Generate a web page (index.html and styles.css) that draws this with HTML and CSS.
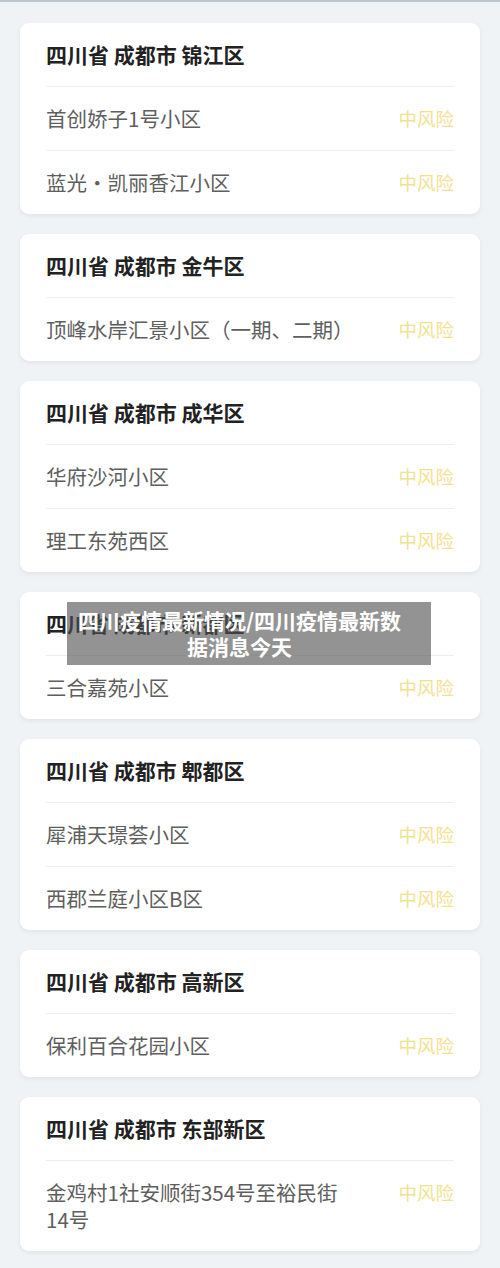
FILE: index.html
```html
<!DOCTYPE html>
<html lang="zh-CN">
<head>
    <meta charset="UTF-8">
    <meta name="viewport" content="width=device-width, initial-scale=1.0">
    <title>四川疫情最新情况</title>
    <link rel="stylesheet" href="styles.css">
</head>
<body>
    <div class="page">
        <div class="card">
            <div class="area">四川省 成都市 锦江区</div>
            <div class="row"><span class="name">首创娇子1号小区</span><span class="risk">中风险</span></div>
            <div class="row"><span class="name">蓝光・凯丽香江小区</span><span class="risk">中风险</span></div>
        </div>

        <div class="card">
            <div class="area">四川省 成都市 金牛区</div>
            <div class="row"><span class="name">顶峰水岸汇景小区（一期、二期）</span><span class="risk">中风险</span></div>
        </div>

        <div class="card">
            <div class="area">四川省 成都市 成华区</div>
            <div class="row"><span class="name">华府沙河小区</span><span class="risk">中风险</span></div>
            <div class="row"><span class="name">理工东苑西区</span><span class="risk">中风险</span></div>
        </div>

        <div class="card">
            <div class="area">四川省 成都市 新都区</div>
            <div class="row"><span class="name">三合嘉苑小区</span><span class="risk">中风险</span></div>
        </div>

        <div class="card">
            <div class="area">四川省 成都市 郫都区</div>
            <div class="row"><span class="name">犀浦天璟荟小区</span><span class="risk">中风险</span></div>
            <div class="row"><span class="name">西郡兰庭小区B区</span><span class="risk">中风险</span></div>
        </div>

        <div class="card">
            <div class="area">四川省 成都市 高新区</div>
            <div class="row"><span class="name">保利百合花园小区</span><span class="risk">中风险</span></div>
        </div>

        <div class="card">
            <div class="area">四川省 成都市 东部新区</div>
            <div class="row"><span class="name">金鸡村1社安顺街354号至裕民街14号</span><span class="risk">中风险</span></div>
        </div>
    </div>

    <div class="caption">四川疫情最新情况/四川疫情最新数据消息今天</div>
</body>
</html>
```

FILE: styles.css
```css
body {
    margin: 0;
    background-color: #f0f3f5;
    font-family: "Noto Sans CJK SC", "Noto Sans", sans-serif;
    border-top: 2px solid #bcc7cf;
}

.page {
    display: flex;
    flex-direction: column;
    gap: 20px;
    padding: 21px 20px 20px;
}

.card {
    background-color: white;
    border-radius: 9px;
    box-shadow: 0 2px 4px rgba(120, 135, 150, 0.12);
}

.area {
    margin: 0 26px;
    padding: 18px 0;
    line-height: 27px;
    font-size: 21px;
    font-weight: bold;
    color: #222;
    border-bottom: 1px solid #eeeeee;
}

.row {
    display: flex;
    justify-content: space-between;
    align-items: flex-start;
    gap: 50px;
    margin: 0 26px;
    padding: 18px 0;
    line-height: 27px;
    border-bottom: 1px solid #eeeeee;
}

.row:last-child {
    border-bottom: none;
}

.name {
    font-size: 20.5px;
    color: #5e5e5e;
}

.risk {
    flex-shrink: 0;
    font-size: 18.5px;
    color: #f2e290;
}

.caption {
    position: absolute;
    left: 67px;
    top: 602px;
    width: 364px;
    box-sizing: border-box;
    padding: 5px 24px 6px 5px;
    background-color: rgba(80, 80, 80, 0.62);
    color: white;
    font-size: 21px;
    font-weight: bold;
    line-height: 26px;
    text-align: center;
}
```
